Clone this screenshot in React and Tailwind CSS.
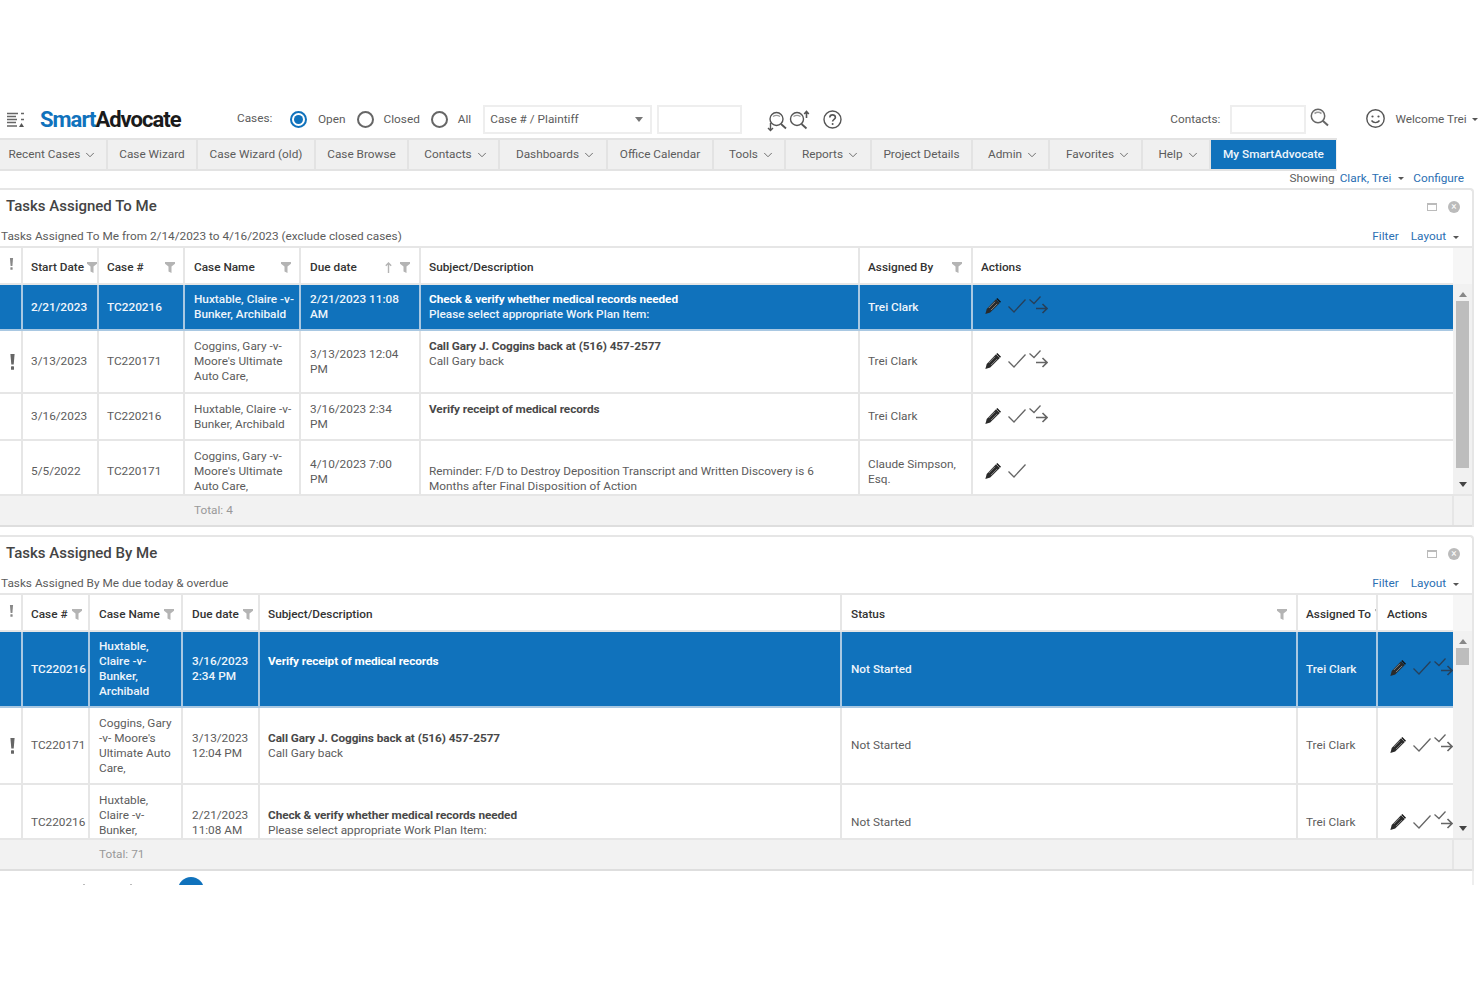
import React from 'react'
import { ChevronDown } from 'lucide-react'

const navItems = [
  { label: 'Recent Cases', width: 'w-[108px]', caret: true, first: true },
  { label: 'Case Wizard', width: 'w-[90px]' },
  { label: 'Case Wizard (old)', width: 'w-[118px]' },
  { label: 'Case Browse', width: 'w-[93px]' },
  { label: 'Contacts', width: 'w-[91px]', caret: true },
  { label: 'Dashboards', width: 'w-[108px]', caret: true },
  { label: 'Office Calendar', width: 'w-[106px]' },
  { label: 'Tools', width: 'w-[72px]', caret: true },
  { label: 'Reports', width: 'w-[86px]', caret: true },
  { label: 'Project Details', width: 'w-[101px]' },
  { label: 'Admin', width: 'w-[77px]', caret: true },
  { label: 'Favorites', width: 'w-[93px]', caret: true },
  { label: 'Help', width: 'w-[68px]', caret: true },
]

// word joiner keeps "-v-" from breaking after its first hyphen
const huxtable = 'Huxtable, Claire -\u2060v- Bunker, Archibald'
const coggins = "Coggins, Gary -\u2060v- Moore's Ultimate Auto Care,"

const assignedToMeCols = [
  { width: 'w-[22px]' },
  { width: 'w-[76px]', label: 'Start Date', filter: 'mr-0' },
  { width: 'w-[86px]', label: 'Case #', filter: 'mr-[8px]' },
  { width: 'w-[116px]', label: 'Case Name', filter: 'mr-[8px]', pad: 'pl-[9px]' },
  { width: 'w-[120px]', label: 'Due date', filter: 'mr-[9px]', sort: true, pad: 'pl-[9px]' },
  { width: 'w-[439px]', label: 'Subject/Description' },
  { width: 'w-[113px]', label: 'Assigned By', filter: 'mr-[9px]' },
  { width: 'w-[482px]', label: 'Actions' },
]

const assignedToMeRows = [
  {
    height: 'h-[46px]', selected: true, start: '2/21/2023', caseNo: 'TC220216',
    name: huxtable, due: '2/21/2023 11:08 AM',
    title: 'Check & verify whether medical records needed',
    desc: ['Please select appropriate Work Plan Item:'],
    person: 'Trei Clark', forward: true,
  },
  {
    height: 'h-[63px]', flag: true, start: '3/13/2023', caseNo: 'TC220171',
    name: coggins, due: '3/13/2023 12:04 PM',
    title: 'Call Gary J. Coggins back at (516) 457-2577',
    desc: ['Call Gary back', '\u00a0'],
    person: 'Trei Clark', forward: true,
  },
  {
    height: 'h-[47px]', start: '3/16/2023', caseNo: 'TC220216',
    name: huxtable, due: '3/16/2023 2:34 PM',
    title: 'Verify receipt of medical records',
    desc: ['\u00a0'],
    person: 'Trei Clark', forward: true,
  },
  {
    height: 'h-[63px]', start: '5/5/2022', caseNo: 'TC220171',
    name: coggins, due: '4/10/2023 7:00 PM',
    title: '\u00a0',
    desc: ['Reminder: F/D to Destroy Deposition Transcript and Written Discovery is 6', 'Months after Final Disposition of Action'],
    person: 'Claude Simpson, Esq.',
  },
]

const assignedByMeCols = [
  { width: 'w-[22px]' },
  { width: 'w-[67px]', label: 'Case #', filter: 'mr-[6px]' },
  { width: 'w-[93px]', label: 'Case Name', filter: 'mr-[7px]', pad: 'pl-[9px]' },
  { width: 'w-[77px]', label: 'Due date', filter: 'mr-[5px]', pad: 'pl-[9px]' },
  { width: 'w-[582px]', label: 'Subject/Description' },
  { width: 'w-[456px]', label: 'Status', filter: 'mr-[9px]', pad: 'pl-[9px]' },
  { width: 'w-[80px]', label: 'Assigned To', filter: 'mr-[-9px]' },
  { width: 'w-[76px]', label: 'Actions', pad: 'pl-[9px]' },
]

const assignedByMeRows = [
  {
    height: 'h-[76px]', selected: true, caseNo: 'TC220216',
    name: huxtable, due: '3/16/2023 2:34 PM',
    title: 'Verify receipt of medical records', desc: ['\u00a0'],
    status: 'Not Started', person: 'Trei Clark', forward: true,
  },
  {
    height: 'h-[77px]', flag: true, caseNo: 'TC220171',
    name: coggins, due: '3/13/2023 12:04 PM',
    title: 'Call Gary J. Coggins back at (516) 457-2577', desc: ['Call Gary back'],
    status: 'Not Started', person: 'Trei Clark', forward: true,
  },
  {
    height: 'h-[77px]', caseNo: 'TC220216',
    name: huxtable, due: '2/21/2023 11:08 AM',
    title: 'Check & verify whether medical records needed',
    desc: ['Please select appropriate Work Plan Item:'],
    status: 'Not Started', person: 'Trei Clark', forward: true,
  },
]

function Caret({ className = '' }) {
  return <span className={`inline-block shrink-0 border-x-[3px] border-t-[3px] border-x-transparent border-t-[#555] ${className}`} />
}

function Radio({ checked }) {
  return (
    <span className={`flex h-[17px] w-[17px] items-center justify-center rounded-full border-2 ${checked ? 'border-[#1072bc]' : 'border-[#666]'}`}>
      {checked && <span className="h-[9px] w-[9px] rounded-full bg-[#1072bc]" />}
    </span>
  )
}

function MenuIcon() {
  return (
    <svg width="18" height="16" viewBox="0 0 18 16" fill="none" stroke="#666" strokeWidth="1.5">
      <path d="M0 1.5h11M14 1.5h3M0 4.5h9M0 7.5h10M14 7.5h3M0 10.5h9M0 14h10" />
      <path d="M12 15l2.5-4 2.5 4z" fill="#555" stroke="none" />
    </svg>
  )
}

function SearchDownIcon() {
  return (
    <svg width="20" height="21" viewBox="0 0 20 21" fill="none" stroke="#555" strokeWidth="1.4">
      <circle cx="9.5" cy="8" r="6.5" />
      <path d="M6 5.5c2-1.3 5-1.3 7 0" stroke="#999" />
      <path d="M14 13l5 4.5" strokeWidth="1.8" />
      <path d="M3.5 12v7M1 17l2.5 2.5L6 17" />
    </svg>
  )
}

function SearchUpIcon() {
  return (
    <svg width="21" height="20" viewBox="0 0 21 20" fill="none" stroke="#555" strokeWidth="1.4">
      <circle cx="8" cy="9" r="6.5" />
      <path d="M4.5 6.5c2-1.3 5-1.3 7 0" stroke="#999" />
      <path d="M12.5 14l5 4.5" strokeWidth="1.8" />
      <path d="M17.5 8V1.5M15.2 4l2.3-2.5L19.8 4" strokeWidth="1.6" />
    </svg>
  )
}

function HelpIcon() {
  return (
    <svg width="19" height="19" viewBox="0 0 19 19" fill="none" stroke="#555" strokeWidth="1.4">
      <circle cx="9.5" cy="9.5" r="8.5" />
      <path d="M6.8 7.4c0-3.4 5.6-3.4 5.6 0 0 2-2.8 2-2.8 4.2" strokeWidth="1.6" />
      <circle cx="9.6" cy="14" r="1" fill="#555" stroke="none" />
    </svg>
  )
}

function SearchIcon() {
  return (
    <svg width="19" height="19" viewBox="0 0 19 19" fill="none" stroke="#666" strokeWidth="1.5">
      <circle cx="8" cy="8" r="6.7" />
      <path d="M4.5 5.5c2-1.3 5-1.3 7 0" stroke="#999" />
      <path d="M12.5 12.5l5.5 5" strokeWidth="2" />
    </svg>
  )
}

function SmileIcon() {
  return (
    <svg width="19" height="19" viewBox="0 0 19 19" fill="none" stroke="#555" strokeWidth="1.4">
      <circle cx="9.5" cy="9.5" r="8.7" />
      <circle cx="6.5" cy="7.5" r="1.1" fill="#555" stroke="none" />
      <circle cx="12.5" cy="7.5" r="1.1" fill="#555" stroke="none" />
      <path d="M5.5 11.5c1.8 2.8 6.2 2.8 8 0" />
    </svg>
  )
}

function FilterIcon({ className = '' }) {
  return (
    <svg className={`shrink-0 ${className}`} width="10" height="11" viewBox="0 0 10 11" fill="#b4b4b4">
      <path d="M0 0h10v1.800L6.500 4.500V11L3.500 9.500v-5L0 1.800z" />
    </svg>
  )
}

function SortArrow() {
  return (
    <svg className="ml-auto mr-[8px] shrink-0" width="7" height="11" viewBox="0 0 7 11" fill="none" stroke="#b4b4b4" strokeWidth="1.400">
      <path d="M3.500 11V1M.8 3.800l2.700-2.800 2.700 2.800" />
    </svg>
  )
}

function Exclaim({ light }) {
  return (
    <div className={`flex justify-center ${light ? 'pl-[2px]' : 'pl-[4px]'}`}>
      <svg width="5" height={light ? 12 : 16} viewBox="0 0 5 16" fill={light ? '#888' : '#666'}>
        <path d="M.4 0h4.200L3.700 10.500H1.300z" />
        <rect x="1" y="12.200" width="3" height="3.600" rx=".6" />
      </svg>
    </div>
  )
}

function PencilIcon() {
  return (
    <svg className="shrink-0" width="16" height="16" viewBox="0 0 16 16">
      <path d="M11 1.200l3.800 3.800-9.600 9.600L0.400 16l1.300-4.900z" fill="#2a2a2a" />
      <path d="M3.800 10l6.200-6.200M6 12.100l6.200-6.200" stroke="#9a9a9a" strokeWidth=".8" />
      <path d="M12.300 0l3.700 3.700-1 1-3.700-3.700z" fill="#111" />
    </svg>
  )
}

function CheckIcon({ color }) {
  return (
    <svg className="shrink-0" width="18" height="14" viewBox="0 0 18 14" fill="none" stroke={color} strokeWidth="1.300">
      <path d="M.5 7.500l5.500 5.500L17.500.500" />
    </svg>
  )
}

function CheckForwardIcon({ color }) {
  return (
    <svg className="shrink-0" width="19" height="18" viewBox="0 0 19 18" fill="none" stroke={color} strokeWidth="1.300">
      <path d="M.5 3.500l4.500 4L11.500.5" />
      <path d="M7 12.500h11M13.500 8l4.500 4.500-4.500 4.500" strokeWidth="1.600" />
    </svg>
  )
}

function ScrollColumn({ thumb }) {
  return (
    <div className="flex w-[19px] shrink-0 flex-col items-center bg-[#f1f1f1]">
      <div className="h-[36px] w-full shrink-0 bg-[#f6f6f6]" />
      <div className="mt-[8px] h-0 w-0 border-x-[4px] border-b-[5px] border-x-transparent border-b-[#888]" />
      <div className={`mt-[4px] w-[13px] bg-[#bdbdbd] ${thumb}`} />
      <div className="mt-auto mb-[7px] h-0 w-0 border-x-[4px] border-t-[5px] border-x-transparent border-t-[#444]" />
    </div>
  )
}

function TaskTable({ cols, rows, bodyHeight, tableWidth, duePad }) {
  return (
    <div className={`overflow-hidden ${bodyHeight} ${tableWidth}`}>
      <table className={`table-fixed border-collapse text-[11.8px] leading-[15px] text-[#5c5c5c] ${tableWidth}`}>
        <colgroup>
          {cols.map((col, i) => (
            <col key={i} className={col.width} />
          ))}
        </colgroup>
        <thead>
          <tr className="h-[36px]">
            {cols.map((col, i) => (
              <th key={i} className="overflow-hidden border-r-2 border-b-2 border-[#e6e6e6] px-0 pt-[3px] text-left font-medium text-[#333] last:border-r-0">
                {i === 0 ? (
                  <div className="-mt-[6px]"><Exclaim light /></div>
                ) : (
                  <div className={`flex items-center whitespace-nowrap ${col.pad || 'pl-[8px]'}`}>
                    <span>{col.label}</span>
                    {col.sort && <SortArrow />}
                    {col.filter && <FilterIcon className={`${col.sort ? '' : 'ml-auto'} ${col.filter}`} />}
                  </div>
                )}
              </th>
            ))}
          </tr>
        </thead>
        <tbody>
          {rows.map((row, i) => {
            const cell = `overflow-hidden border-r-2 border-b-2 align-middle last:border-r-0 ${row.selected ? 'border-[#a9c8e2]' : 'border-[#e6e6e6]'}`
            return (
              <tr key={i} className={`${row.height} ${row.selected ? 'bg-[#1072bc] font-medium text-[#eef5fb]' : ''}`}>
                <td className={cell}>{row.flag && <Exclaim />}</td>
                {row.start && <td className={`${cell} pl-[8px]`}>{row.start}</td>}
                <td className={`${cell} pl-[8px] whitespace-nowrap`}>{row.caseNo}</td>
                <td className={`${cell} pl-[9px] pr-[4px]`}>{row.name}</td>
                <td className={`${cell} pl-[9px] ${duePad}`}>{row.due}</td>
                <td className={`${cell} pl-[8px] whitespace-nowrap`}>
                  <div className={`font-bold tracking-[-0.08px] ${row.selected ? 'text-white' : 'text-[#484848]'}`}>{row.title}</div>
                  {row.desc.map((line, j) => (
                    <div key={j}>{line}</div>
                  ))}
                </td>
                {row.status && <td className={`${cell} pl-[9px]`}>{row.status}</td>}
                <td className={`${cell} pl-[8px] pr-[8px]`}>{row.person}</td>
                <td className={`${cell} pl-[12px]`}>
                  <div className="-mt-[2px] flex items-center">
                    <PencilIcon />
                    <div className="ml-[7px]"><CheckIcon color={row.selected ? '#27405a' : '#666'} /></div>
                    {row.forward && (
                      <div className="-mt-[3px] ml-[3px]"><CheckForwardIcon color={row.selected ? '#27405a' : '#666'} /></div>
                    )}
                  </div>
                </td>
              </tr>
            )
          })}
        </tbody>
      </table>
    </div>
  )
}

function Panel({ title, subtitle, cols, rows, bodyHeight, tableWidth, duePad, thumb, scrollHeight, totalOffset, total }) {
  return (
    <section className="w-[1474px] rounded-tr border-t-2 border-r-2 border-[#e6e6e6]">
      <div className="flex h-[36px] items-center pb-[3px] pl-[6px] pr-[12px]">
        <h2 className="text-[15px] font-medium text-[#444]">{title}</h2>
        <div className="ml-auto flex items-center gap-[11px]">
          <span className="h-[8px] w-[10px] border border-t-2 border-[#bbb]" />
          <span className="flex h-[12px] w-[12px] items-center justify-center rounded-full bg-[#bbb] text-[10px] leading-none text-white">×</span>
        </div>
      </div>
      <div className="flex h-[20px] items-center pt-[2px] pl-[1px] pr-[13px] text-[11.8px] text-[#5c5c5c]">
        <span>{subtitle}</span>
        <span className="ml-auto text-[#2b6fb3]">Filter</span>
        <span className="ml-[12px] text-[#2b6fb3]">Layout</span>
        <Caret className="ml-[7px]" />
      </div>
      <div className={`flex border-t-2 border-[#e6e6e6] ${scrollHeight}`}>
        <TaskTable cols={cols} rows={rows} bodyHeight={bodyHeight} tableWidth={tableWidth} duePad={duePad} />
        <ScrollColumn thumb={thumb} />
      </div>
      <div className="flex h-[33px] border-y-2 border-t-[#e6e6e6] border-b-[#dedede] bg-[#f2f2f2] text-[11.8px] text-[#999]">
        <div className={`flex items-center ${totalOffset}`}>Total: {total}</div>
        <div className="ml-auto w-[20px] border-l-2 border-[#e6e6e6]" />
      </div>
    </section>
  )
}

export default function App() {
  return (
    <div className="h-[987px] w-[1480px] overflow-hidden bg-white pt-[103px] font-['Roboto',sans-serif] text-[11.8px] text-[#5c5c5c]">
      {/* Top bar */}
      <header className="mb-[2px] flex h-[33px] items-center">
        <div className="ml-[7px] w-[33px]"><MenuIcon /></div>
        <div className="w-[197px] text-[22px] font-bold tracking-[-1px] text-[#1a1a1a]">
          <span className="text-[#1072bc]">Smart</span>Advocate
        </div>
        <span className="-mt-[2px] w-[53px]">Cases:</span>
        <Radio checked />
        <span className="ml-[11px]">Open</span>
        <span className="ml-[11px]"><Radio /></span>
        <span className="ml-[10px]">Closed</span>
        <span className="ml-[11px]"><Radio /></span>
        <span className="ml-[10px]">All</span>
        <div className="ml-[12px] flex h-[29px] w-[169px] items-center border-2 border-[#eee] pl-[5px] pr-[7px]">
          <span>Case # / Plaintiff</span>
          <span className="ml-auto h-0 w-0 border-x-[4px] border-t-[5px] border-x-transparent border-t-[#777]" />
        </div>
        <div className="ml-[5px] h-[29px] w-[85px] border-2 border-[#eee]" />
        <div className="ml-[25px] mt-[3px]"><SearchDownIcon /></div>
        <div className="ml-[2px] mt-[1px]"><SearchUpIcon /></div>
        <div className="-mt-[1px] ml-[13px]"><HelpIcon /></div>
        <span className="ml-[328px] whitespace-nowrap">Contacts:</span>
        <div className="ml-[10px] h-[29px] w-[76px] shrink-0 border-2 border-[#eee]" />
        <div className="-mt-[4px] ml-[4px]"><SearchIcon /></div>
        <div className="-mt-[3px] ml-[37px]"><SmileIcon /></div>
        <span className="ml-[10px] whitespace-nowrap">Welcome Trei</span>
        <Caret className="ml-[5px]" />
      </header>

      {/* Main nav */}
      <nav className="flex h-[33px] w-[1337px] border-y-2 border-[#e3e3e3] bg-[#f0f0f0]">
        {navItems.map((item) => (
          <div
            key={item.label}
            className={`flex shrink-0 items-center justify-center border-r-2 border-[#e3e3e3] ${item.width} ${item.caret && !item.first ? 'pl-[6px]' : ''}`}
          >
            <span>{item.label}</span>
            {item.caret && <ChevronDown className="ml-[3px]" size={14} strokeWidth={1.6} color="#666" />}
          </div>
        ))}
        <div className="flex w-[125px] items-center justify-center bg-[#1072bc] font-medium text-[#eef5fb]">My SmartAdvocate</div>
      </nav>

      <div className="flex h-[17px] w-[1464px] items-center justify-end pb-[2px]">
        <span>Showing</span>
        <span className="ml-[5px] text-[#2b6fb3]">Clark, Trei</span>
        <Caret className="ml-[7px]" />
        <span className="ml-[9px] text-[#2b6fb3]">Configure</span>
      </div>

      <Panel
        title="Tasks Assigned To Me"
        subtitle="Tasks Assigned To Me from 2/14/2023 to 4/16/2023 (exclude closed cases)"
        cols={assignedToMeCols}
        rows={assignedToMeRows}
        bodyHeight="h-[246px]"
        scrollHeight="h-[248px]"
        tableWidth="w-[1454px]"
        duePad="pr-[18px]"
        thumb="h-[167px]"
        totalOffset="ml-[194px]"
        total={4}
      />

      <div className="h-[8px]" />

      <Panel
        title="Tasks Assigned By Me"
        subtitle="Tasks Assigned By Me due today & overdue"
        cols={assignedByMeCols}
        rows={assignedByMeRows}
        bodyHeight="h-[243px]"
        scrollHeight="h-[245px]"
        tableWidth="w-[1453px]"
        duePad="pr-[2px]"
        thumb="h-[17px]"
        totalOffset="ml-[99px]"
        total={71}
      />

      {/* Cut off edge of the next widget */}
      <div className="flex h-[14px] w-[1474px] items-end border-r-2 border-[#eee]">
        <span className="ml-[83px] h-[1px] w-[2px] bg-[#bbb]" />
        <span className="ml-[45px] h-[1px] w-[2px] bg-[#bbb]" />
        <div className="ml-[46px] h-[8px] w-[26px] overflow-hidden">
          <div className="h-[26px] w-[26px] rounded-full bg-[#1072bc]" />
        </div>
      </div>
    </div>
  )
}
